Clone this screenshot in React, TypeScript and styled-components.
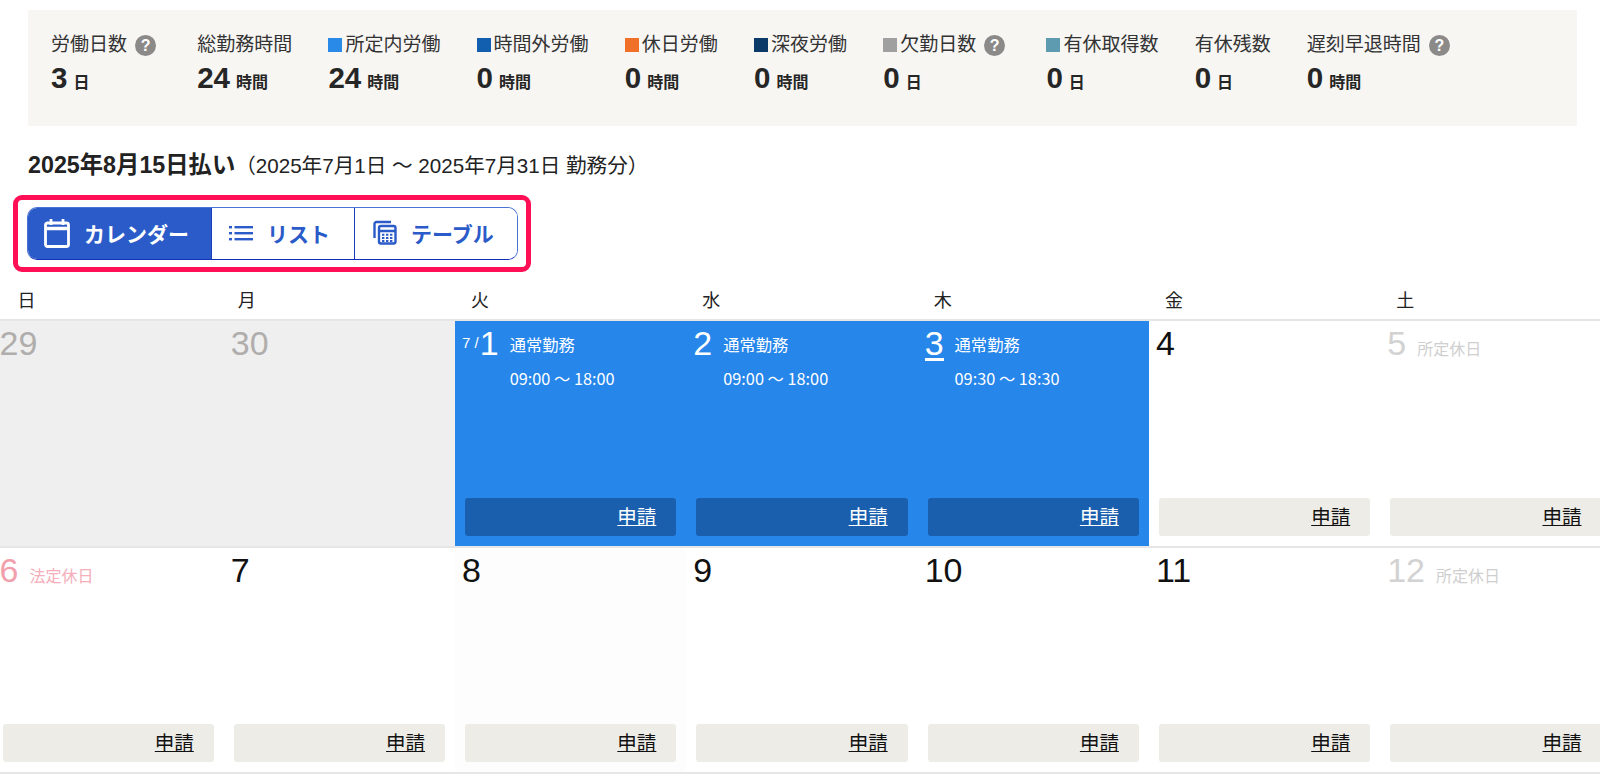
import React from "react";
import styled, { createGlobalStyle } from "styled-components";

const Global = createGlobalStyle`
  html, body { margin: 0; padding: 0; background: #fff; overflow: hidden; }
  body { font-family: "Liberation Sans", "Noto Sans CJK JP", sans-serif; color: #222; }
  * { box-sizing: border-box; }
`;
const Page = styled.div`width: 1600px; height: 779px; overflow: hidden;`;
const Summary = styled.section`
  margin: 10px 23px 0 28px; height: 116px; background: #f7f6f3;
  padding: 23px 0 0 23px; display: flex; gap: 36.2px; align-items: flex-start;
`;
const Stat = styled.div`display: flex; flex-direction: column;`;
const StatLabel = styled.div`display: flex; align-items: center; font-size: 19px; line-height: 24px; color: #333; white-space: nowrap;`;
const Swatch = styled.span<{ $c: string }>`width: 14px; height: 14px; margin-right: 3px; background: ${p => p.$c};`;
const Help = styled.span`
  width: 21px; height: 21px; margin: 0 5px 0 8px; border-radius: 50%; background: #8c8a88; color: #fff;
  font-size: 16px; font-weight: 700; line-height: 21px; text-align: center;
`;
const StatValue = styled.div`margin-top: 3px; font-size: 29.5px; line-height: 36px; font-weight: 700; color: #262626; white-space: nowrap;`;
const Unit = styled.span`margin-left: 6px; font-size: 16px; font-weight: 700;`;
const Period = styled.h2`margin: 24px 0 0 28px; font-size: 20.6px; line-height: 30px; font-weight: 400; color: #222; white-space: nowrap;`;
const PeriodStrong = styled.strong`font-size: 23.3px; font-weight: 700;`;
const Highlight = styled.div`
  display: inline-flex; margin: 14px 0 0 13px; padding: 7px 8px 7px 9px; border: 5px solid #ff0f55; border-radius: 9px;
`;
const Toggle = styled.div`display: flex; height: 53px; border-radius: 10px; overflow: hidden; border: 1px solid #4a72d2; border-bottom-color: #1030b8;`;
const Segment = styled.button<{ $active?: boolean; $w: number; $pad: number }>`
  width: ${p => p.$w}px; display: flex; align-items: center; gap: 14px; padding: 0 0 2px ${p => p.$pad}px;
  border: 0; border-right: 1px solid #1a3cb8; font: 700 21px "Liberation Sans", "Noto Sans CJK JP", sans-serif;
  background: ${p => (p.$active ? "#2a5bc8" : "#fff")}; color: ${p => (p.$active ? "#fff" : "#2a5bc8")};
  &:last-child { border-right: 0; }
`;
const Calendar = styled.div`margin: 5px 0 0 -7.5px; width: 1619px;`;
const Heads = styled.div`display: grid; grid-template-columns: repeat(7, 1fr); height: 44px; border-bottom: 2px solid #e6e6e6;`;
const Head = styled.div`
  padding: 11px 0 0 16px; font-size: 18px; line-height: 26px; color: #222;
  &:first-child { padding-left: 25px; }
  &:nth-child(2) { padding-left: 14px; }
`;
const Week = styled.div`display: grid; grid-template-columns: repeat(7, 1fr); height: 226.5px; border-bottom: 2px solid #e6e6e6;`;
type Tone = "plain" | "past" | "work" | "off" | "legal" | "tint";
const Cell = styled.div<{ $t: Tone }>`
  display: flex; flex-direction: column; padding: 2px 10px 10px 7px; color: #111;
  background: ${p => ({ plain: "#fff", past: "#efefef", work: "#2686ea", off: "#fff", legal: "#fff", tint: "#fdfdfd" }[p.$t])};
`;
const CellTop = styled.div`display: flex; align-items: flex-start; flex: 1;`;
const Month = styled.span`margin: 11px 1px 0 0; font-size: 15px; line-height: 18px; color: #fff; white-space: nowrap;`;
const Day = styled.span<{ $t: Tone; $today?: boolean }>`
  font-size: 34px; line-height: 40px; height: ${p => (p.$today ? "38px" : "40px")};
  border-bottom: ${p => (p.$today ? "3px solid #fff" : "0")};
  color: ${p => ({ plain: "#111", tint: "#111", past: "#b0aeac", work: "#fff", off: "#d2d2d2", legal: "#f29fad" }[p.$t])};
`;
const Note = styled.span<{ $t: Tone }>`
  margin: 17px 0 0 11px; font-size: 16px; line-height: 20px; white-space: nowrap;
  color: ${p => (p.$t === "legal" ? "#f5aeba" : "#cfcfcf")};
`;
const Shift = styled.div`margin-left: 11px; padding-top: 10px; color: #fff; font-family: "Noto Sans CJK JP", sans-serif; font-size: 16.3px; line-height: 22px; white-space: nowrap;`;
const ShiftTime = styled.div`margin-top: 12px;`;
const Apply = styled.a<{ $dark?: boolean }>`
  display: block; height: 38px; margin-left: 3px; padding-right: 20px; border-radius: 3px; text-align: right;
  font-size: 19.5px; line-height: 39px; text-decoration: underline;
  background: ${p => (p.$dark ? "#1a5fae" : "#edece7")}; color: ${p => (p.$dark ? "#fff" : "#111")};
`;

const stats = [
  { l: "労働日数", v: "3", u: "日", h: true },
  { l: "総勤務時間", v: "24", u: "時間" },
  { l: "所定内労働", v: "24", u: "時間", c: "#2a8ae8" },
  { l: "時間外労働", v: "0", u: "時間", c: "#125fb0" },
  { l: "休日労働", v: "0", u: "時間", c: "#f07028" },
  { l: "深夜労働", v: "0", u: "時間", c: "#0c3a68" },
  { l: "欠勤日数", v: "0", u: "日", c: "#a0a0a0", h: true },
  { l: "有休取得数", v: "0", u: "日", c: "#5f9bb0" },
  { l: "有休残数", v: "0", u: "日" },
  { l: "遅刻早退時間", v: "0", u: "時間", h: true },
];
type D = { n: number; t: Tone; note?: string; shift?: string; month?: boolean; today?: boolean; noApply?: boolean };
const weeks: D[][] = [
  [
    { n: 29, t: "past", noApply: true }, { n: 30, t: "past", noApply: true },
    { n: 1, t: "work", month: true, shift: "09:00 〜 18:00" },
    { n: 2, t: "work", shift: "09:00 〜 18:00" },
    { n: 3, t: "work", shift: "09:30 〜 18:30", today: true },
    { n: 4, t: "plain" }, { n: 5, t: "off", note: "所定休日" },
  ],
  [
    { n: 6, t: "legal", note: "法定休日" }, { n: 7, t: "plain" }, { n: 8, t: "tint" }, { n: 9, t: "plain" },
    { n: 10, t: "plain" }, { n: 11, t: "plain" }, { n: 12, t: "off", note: "所定休日" },
  ],
];

const CalendarIcon = () => (
  <svg width="26" height="30" viewBox="0 0 26 30" fill="none" stroke="currentColor" strokeWidth="2.8">
    <rect x="1.5" y="5" width="23" height="23.5" rx="2" />
    <path d="M1.5 10.5h23" strokeWidth="3.5" />
    <path d="M7 1v6M19 1v6" />
  </svg>
);
const ListIcon = () => (
  <svg width="24" height="16" viewBox="0 0 24 16" fill="currentColor">
    <rect x="0" y="1" width="3" height="2.4" /><rect x="5.5" y="1" width="18.5" height="2.4" />
    <rect x="0" y="7" width="3" height="2.4" /><rect x="5.5" y="7" width="18.5" height="2.4" />
    <rect x="0" y="13" width="3" height="2.4" /><rect x="5.5" y="13" width="18.5" height="2.4" />
  </svg>
);
const TableIcon = () => (
  <svg width="24" height="25" viewBox="0 0 24 25" fill="none" stroke="currentColor" strokeWidth="2.4">
    <path d="M18 2H3.5A2 2 0 0 0 1.5 4v14" />
    <rect x="6" y="6" width="16.5" height="17.5" rx="2" />
    <path d="M6 11h16.5" />
    <path d="M9 14.8h2.4M13 14.8h2.4M17 14.8h2.4M9 18h2.4M13 18h2.4M17 18h2.4M9 21h2.4M13 21h2.4M17 21h2.4" strokeWidth="2" />
  </svg>
);

export default function App() {
  return (
    <Page>
      <Global />
      <Summary>
        {stats.map(s => (
          <Stat key={s.l}>
            <StatLabel>
              {s.c && <Swatch $c={s.c} />}
              {s.l}
              {s.h && <Help>?</Help>}
            </StatLabel>
            <StatValue>{s.v}<Unit>{s.u}</Unit></StatValue>
          </Stat>
        ))}
      </Summary>
      <Period><PeriodStrong>2025年8月15日払い</PeriodStrong>（2025年7月1日 〜 2025年7月31日 勤務分）</Period>
      <Highlight>
        <Toggle>
          <Segment $active $w={184} $pad={16}><CalendarIcon />カレンダー</Segment>
          <Segment $w={143} $pad={17}><ListIcon />リスト</Segment>
          <Segment $w={162} $pad={18}><TableIcon />テーブル</Segment>
        </Toggle>
      </Highlight>
      <Calendar>
        <Heads>{["日", "月", "火", "水", "木", "金", "土"].map(d => <Head key={d}>{d}</Head>)}</Heads>
        {weeks.map((w, i) => (
          <Week key={i}>
            {w.map(d => (
              <Cell key={d.n} $t={d.t}>
                <CellTop>
                  {d.month && <Month>7 /</Month>}
                  <Day $t={d.t} $today={d.today}>{d.n}</Day>
                  {d.note && <Note $t={d.t}>{d.note}</Note>}
                  {d.shift && <Shift>通常勤務<ShiftTime>{d.shift}</ShiftTime></Shift>}
                </CellTop>
                {!d.noApply && <Apply $dark={d.t === "work"}>申請</Apply>}
              </Cell>
            ))}
          </Week>
        ))}
      </Calendar>
    </Page>
  );
}
